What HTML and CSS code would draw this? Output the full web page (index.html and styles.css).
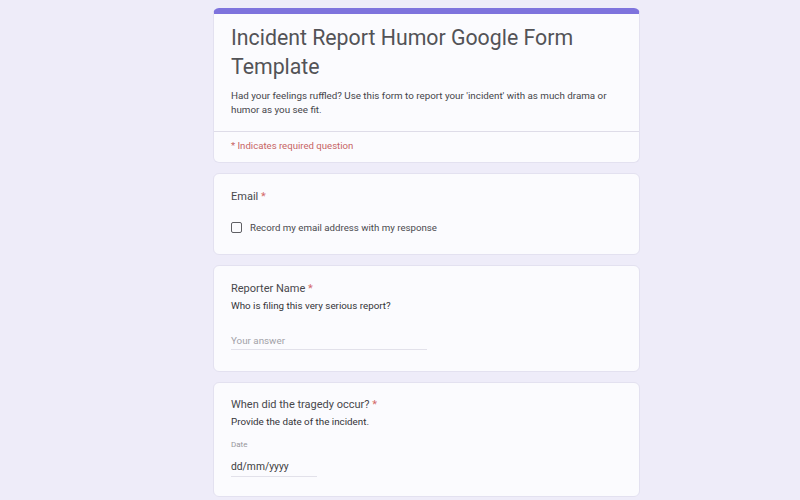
FILE: index.html
```html
<!DOCTYPE html>
<html lang="en">
<head>
    <meta charset="UTF-8">
    <meta name="viewport" content="width=device-width, initial-scale=1.0">
    <title>Incident Report Humor Google Form Template</title>
    <link rel="stylesheet" href="styles.css">
</head>
<body>

    <div class="form-wrap">
        <!-- Cabecera del formulario -->
        <div class="card header-card">
            <div class="header-main">
                <h1 class="form-title">Incident Report Humor Google Form Template</h1>
                <p class="form-desc">Had your feelings ruffled? Use this form to report your 'incident' with as much drama or humor as you see fit.</p>
            </div>
            <div class="header-note">* Indicates required question</div>
        </div>

        <div class="card question email-card">
            <div class="q-title">Email <span class="req">*</span></div>
            <label class="check-row">
                <span class="check-box"></span>
                Record my email address with my response
            </label>
        </div>

        <div class="card question">
            <div class="q-title">Reporter Name <span class="req">*</span></div>
            <div class="q-desc">Who is filing this very serious report?</div>
            <div class="text-answer">Your answer</div>
        </div>

        <div class="card question date-card">
            <div class="q-title">When did the tragedy occur? <span class="req">*</span></div>
            <div class="q-desc">Provide the date of the incident.</div>
            <div class="date-label">Date</div>
            <div class="date-input">dd/mm/yyyy</div>
        </div>
    </div>

</body>
</html>
```

FILE: styles.css
```css
body {
    font-family: Roboto, 'Noto Sans', sans-serif;
    margin: 0;
    background-color: #eeecf9;
    color: #3c3c40;
}
.form-wrap {
    width: 427px;
    margin-left: calc(50% - 187px);
    padding-top: 8px;
    display: flex;
    flex-direction: column;
    gap: 10px;
}
.card {
    background-color: #fbfbfe;
    border: 1px solid #e3e1f0;
    border-radius: 6px;
    box-sizing: border-box;
}
.header-card {
    border-top: 6px solid #7e73dd;
}
.header-main {
    padding: 9px 17px 14px;
    border-bottom: 1px solid #dedce8;
}
.form-title {
    font-size: 21.3px;
    font-weight: 400;
    line-height: 29px;
    margin: 0 0 8px;
    color: #535357;
}
.form-desc {
    font-size: 9.8px;
    line-height: 14px;
    margin: 0;
    color: #45454a;
}
.header-note {
    padding: 8px 17px 11px;
    font-size: 9.6px;
    color: #c76464;
}
.question {
    padding: 15px 17px 21px;
}
.q-title {
    font-size: 11px;
    line-height: 16px;
    color: #48484c;
}
.req {
    color: #d46a6a;
}
.email-card {
    padding-bottom: 21px;
}
.email-card .q-title {
    margin-bottom: 17px;
}
.check-row {
    display: flex;
    align-items: center;
    gap: 8px;
    font-size: 9.7px;
    color: #4a4a4e;
}
.check-box {
    width: 9px;
    height: 9px;
    border: 1.5px solid #5f5f64;
    border-radius: 2px;
}
.q-desc {
    font-size: 9.8px;
    line-height: 14px;
    margin-top: 2px;
    color: #333337;
}
.text-answer {
    width: 196px;
    margin-top: 22px;
    padding-bottom: 3px;
    border-bottom: 1px solid #e2e1ea;
    font-size: 9.8px;
    color: #a2a2a8;
}
.date-card {
    padding-top: 14px;
    padding-bottom: 19px;
}
.date-label {
    margin-top: 11px;
    font-size: 8px;
    color: #97979c;
}
.date-input {
    width: 86px;
    margin-top: 11px;
    padding-bottom: 3px;
    border-bottom: 1px solid #e2e1ea;
    font-size: 10.3px;
    color: #3c3c40;
}
```
